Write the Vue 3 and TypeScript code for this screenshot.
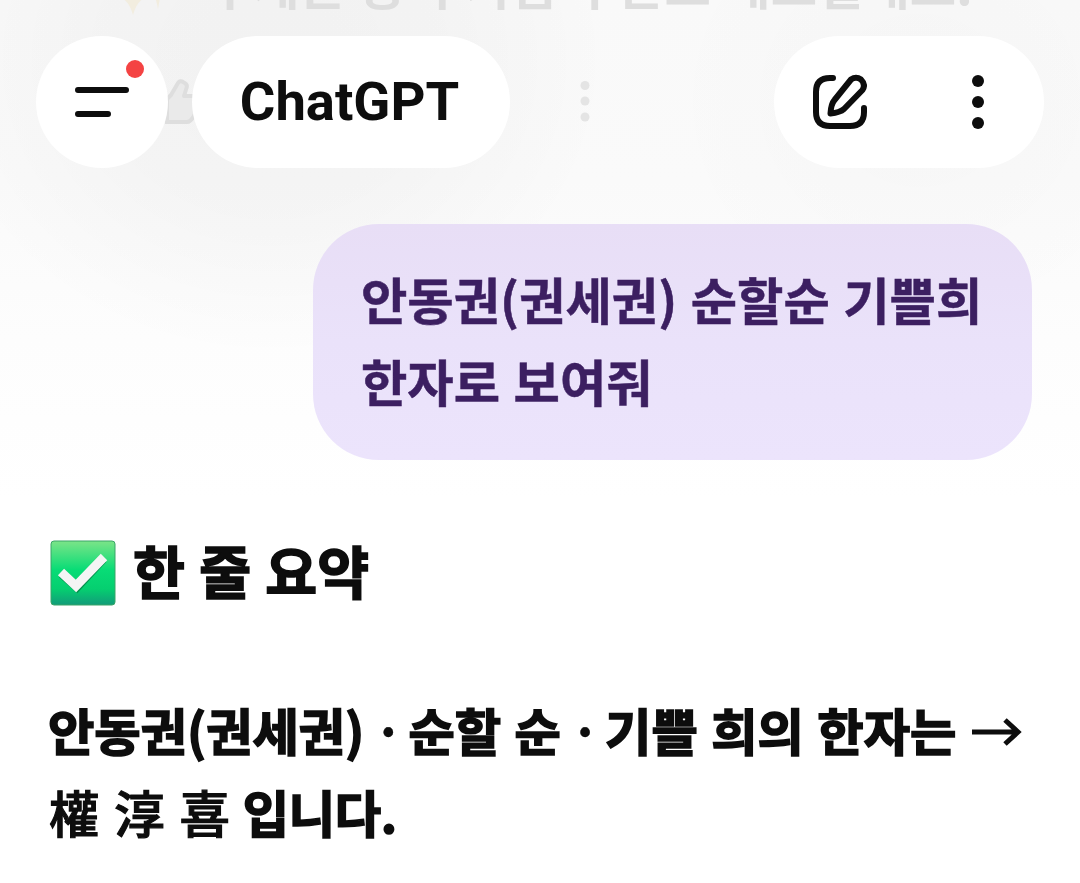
<template>
  <div class="screen">
    <div class="backdrop" aria-hidden="true"></div>

    <div class="previous" aria-hidden="true">
      <svg class="sparkles" viewBox="0 0 50 54">
        <path d="M21 8 Q22 30 38 34 Q25 38 21 54 Q17 38 4 34 Q20 30 21 8Z" />
        <path d="M46 8 Q47 27 50 30 Q48 36 46 48 Q44 36 40 30 Q45 27 46 8Z" />
      </svg>
      <span class="previous-text">{{ previousText }}</span>
    </div>

    <header class="topbar">
      <button class="pill menu" aria-label="메뉴">
        <svg width="54" height="32" viewBox="0 0 54 32">
          <path d="M3 4H51M3 28H33" fill="none" stroke="#0d0d0d" stroke-width="6" stroke-linecap="round" />
        </svg>
        <i class="dot"></i>
      </button>
      <div class="pill title">ChatGPT</div>
      <svg class="ghost-dots" width="10" height="42" viewBox="0 0 10 42">
        <circle cx="5" cy="4.5" r="4.5" />
        <circle cx="5" cy="20" r="4.5" />
        <circle cx="5" cy="36" r="4.5" />
      </svg>
      <div class="pill actions">
        <svg width="54" height="56" viewBox="0 0 54 56" class="edit">
          <path d="M20 4H17Q3 4 3 18V38Q3 52 17 52H37Q51 52 51 38V34" />
          <path d="M38 5.5Q43 2 48 5.5Q53 10.500 49.500 16L31 35Q27 38.500 17.500 39.500Q18 30 21.500 26Z" />
        </svg>
        <svg width="12" height="54" viewBox="0 0 12 54" fill="#0d0d0d">
          <circle cx="6" cy="6" r="6" />
          <circle cx="6" cy="27" r="6" />
          <circle cx="6" cy="48" r="6" />
        </svg>
      </div>
      <svg class="thumb" width="34" height="48" viewBox="0 0 34 48">
        <path d="M3 45H25Q29 45 33 37V19H22L24.500 11Q26 7 21 5Q18 3 16 6L9 18L5 22V45" />
      </svg>
    </header>

    <main class="chat">
      <div class="bubble">
        <div v-for="line in question" :key="line">{{ line }}</div>
      </div>

      <h2 class="summary">
        <svg width="66" height="66" viewBox="0 0 66 66">
          <defs>
            <linearGradient id="green" x1="0" y1="0" x2="0" y2="1">
              <stop offset="0" stop-color="#7be488" />
              <stop offset="0.45" stop-color="#08dc76" />
              <stop offset="0.75" stop-color="#05cf70" />
              <stop offset="1" stop-color="#129b79" />
            </linearGradient>
          </defs>
          <rect x="1" y="1" width="64" height="64" rx="3" fill="url(#green)" stroke="#3aa568" stroke-width="1" />
          <path d="M12 34L27 47L53 19" class="tick-shadow" />
          <path d="M11 32L26 46L54 17" class="tick" />
        </svg>
        <span>한 줄 요약</span>
      </h2>

      <p class="answer">
        <span>안동권(권세권)<i class="middot"> · </i>순할 순<i class="middot"> · </i>기쁠 희의 한자는</span>
        <svg class="arrow" width="50" height="28" viewBox="0 0 50 28">
          <path d="M0 14H46M33 2L46 14L33 26" />
        </svg>
        <br />
        <span class="hanja">權 淳 喜</span><span class="ending">입니다.</span>
      </p>
    </main>
  </div>
</template>

<script setup lang="ts">
const previousText: string = '주제는 공 부자금 수준도 해보실래요.';

const question: string[] = [
  '안동권(권세권) 순할순 기쁠희',
  '한자로 보여줘',
];
</script>

<style>
body {
  margin: 0;
}
</style>

<style scoped>
.screen {
  position: relative;
  width: 1080px;
  height: 883px;
  overflow: hidden;
  background: #fff;
  color: #0d0d0d;
  font-family: Roboto, "Noto Sans CJK KR", sans-serif;
}
.backdrop {
  position: absolute;
  inset: 0 0 auto;
  height: 500px;
  background:
    radial-gradient(ellipse 340px 300px at 270px 60px, rgba(0, 0, 0, 0.032), rgba(0, 0, 0, 0.022) 50%, transparent),
    radial-gradient(ellipse 260px 240px at 920px 100px, rgba(0, 0, 0, 0.016), transparent),
    linear-gradient(#f9f9f9 0, #fafafa 180px, #fdfdfd 340px, #fff 500px);
}
.previous {
  position: absolute;
  top: -46px;
  left: 112px;
  display: flex;
  gap: 45px;
  height: 61px;
}
.sparkles {
  width: 50px;
  height: 54px;
  margin-top: 7px;
  fill: #f2eddf;
}
.previous-text {
  color: #dedede;
  font: 700 50.4px/60px "Noto Sans CJK KR", sans-serif;
  word-spacing: 2px;
  white-space: nowrap;
}
.topbar {
  position: relative;
  display: flex;
  align-items: center;
  padding: 36px 36px 0;
}
.pill {
  display: flex;
  align-items: center;
  box-sizing: border-box;
  height: 132px;
  border: 0;
  border-radius: 66px;
  background: #fff;
}
.menu {
  position: relative;
  z-index: 1;
  justify-content: center;
  width: 132px;
  padding: 0;
}
.dot {
  position: absolute;
  top: 24px;
  left: 90px;
  width: 18px;
  height: 18px;
  border-radius: 50%;
  background: #f44343;
}
.title {
  z-index: 1;
  justify-content: center;
  width: 318px;
  margin-left: 24px;
  padding: 0 3px 1px 0;
  font-size: 54.4px;
  font-weight: 700;
}
.ghost-dots {
  margin-left: 70px;
  fill: #e4e4e4;
}
.actions {
  width: 270px;
  margin-left: auto;
  padding-left: 39px;
  gap: 105px;
}
.edit {
  fill: none;
  stroke: #0d0d0d;
  stroke-width: 6;
  stroke-linecap: round;
  stroke-linejoin: round;
}
.thumb {
  position: absolute;
  top: 77px;
  left: 162px;
  fill: #eaeaea;
  stroke: #dedede;
  stroke-width: 4;
  stroke-linejoin: round;
}
.chat {
  position: relative;
}
.bubble {
  box-sizing: border-box;
  width: 719px;
  height: 236px;
  margin: 56px 48px 0 auto;
  padding: 34px 48px;
  border-radius: 66px;
  background: linear-gradient(#e8def6, #eae2fa 50%, #ece4fc);
  color: #3c1f61;
  font: 700 50.4px/82px "Noto Sans CJK KR", sans-serif;
  word-spacing: 2px;
  white-space: nowrap;
  -webkit-text-stroke: 0.5px #3c1f61;
}
.summary {
  display: flex;
  align-items: center;
  gap: 17px;
  height: 82px;
  margin: 72px 50px 0;
  font: 700 56.4px/78px "Noto Sans CJK KR", sans-serif;
  word-spacing: 1.5px;
  -webkit-text-stroke: 1.7px #0d0d0d;
}
.summary span {
  padding-bottom: 6px;
}
.tick {
  fill: none;
  stroke: #f5f5f5;
  stroke-width: 9;
}
.tick-shadow {
  fill: none;
  stroke: #06934f;
  stroke-width: 9;
}
.answer {
  margin: 75px 48px 0;
  font: 700 50.4px/82px "Noto Sans CJK KR", sans-serif;
  word-spacing: 2px;
  white-space: nowrap;
  -webkit-text-stroke: 1.7px #0d0d0d;
}
.middot {
  font-style: normal;
  letter-spacing: -4.2px;
  -webkit-text-stroke: 0.5px #0d0d0d;
}
.arrow {
  margin-left: 16px;
  vertical-align: 5px;
  fill: none;
  stroke: #0d0d0d;
  stroke-width: 5;
}
.hanja {
  margin-left: 1px;
  font-weight: 500;
  word-spacing: 3.5px;
  -webkit-text-stroke: 1.2px #0d0d0d;
}
.ending {
  margin-left: 13px;
  letter-spacing: -0.4px;
}
</style>
